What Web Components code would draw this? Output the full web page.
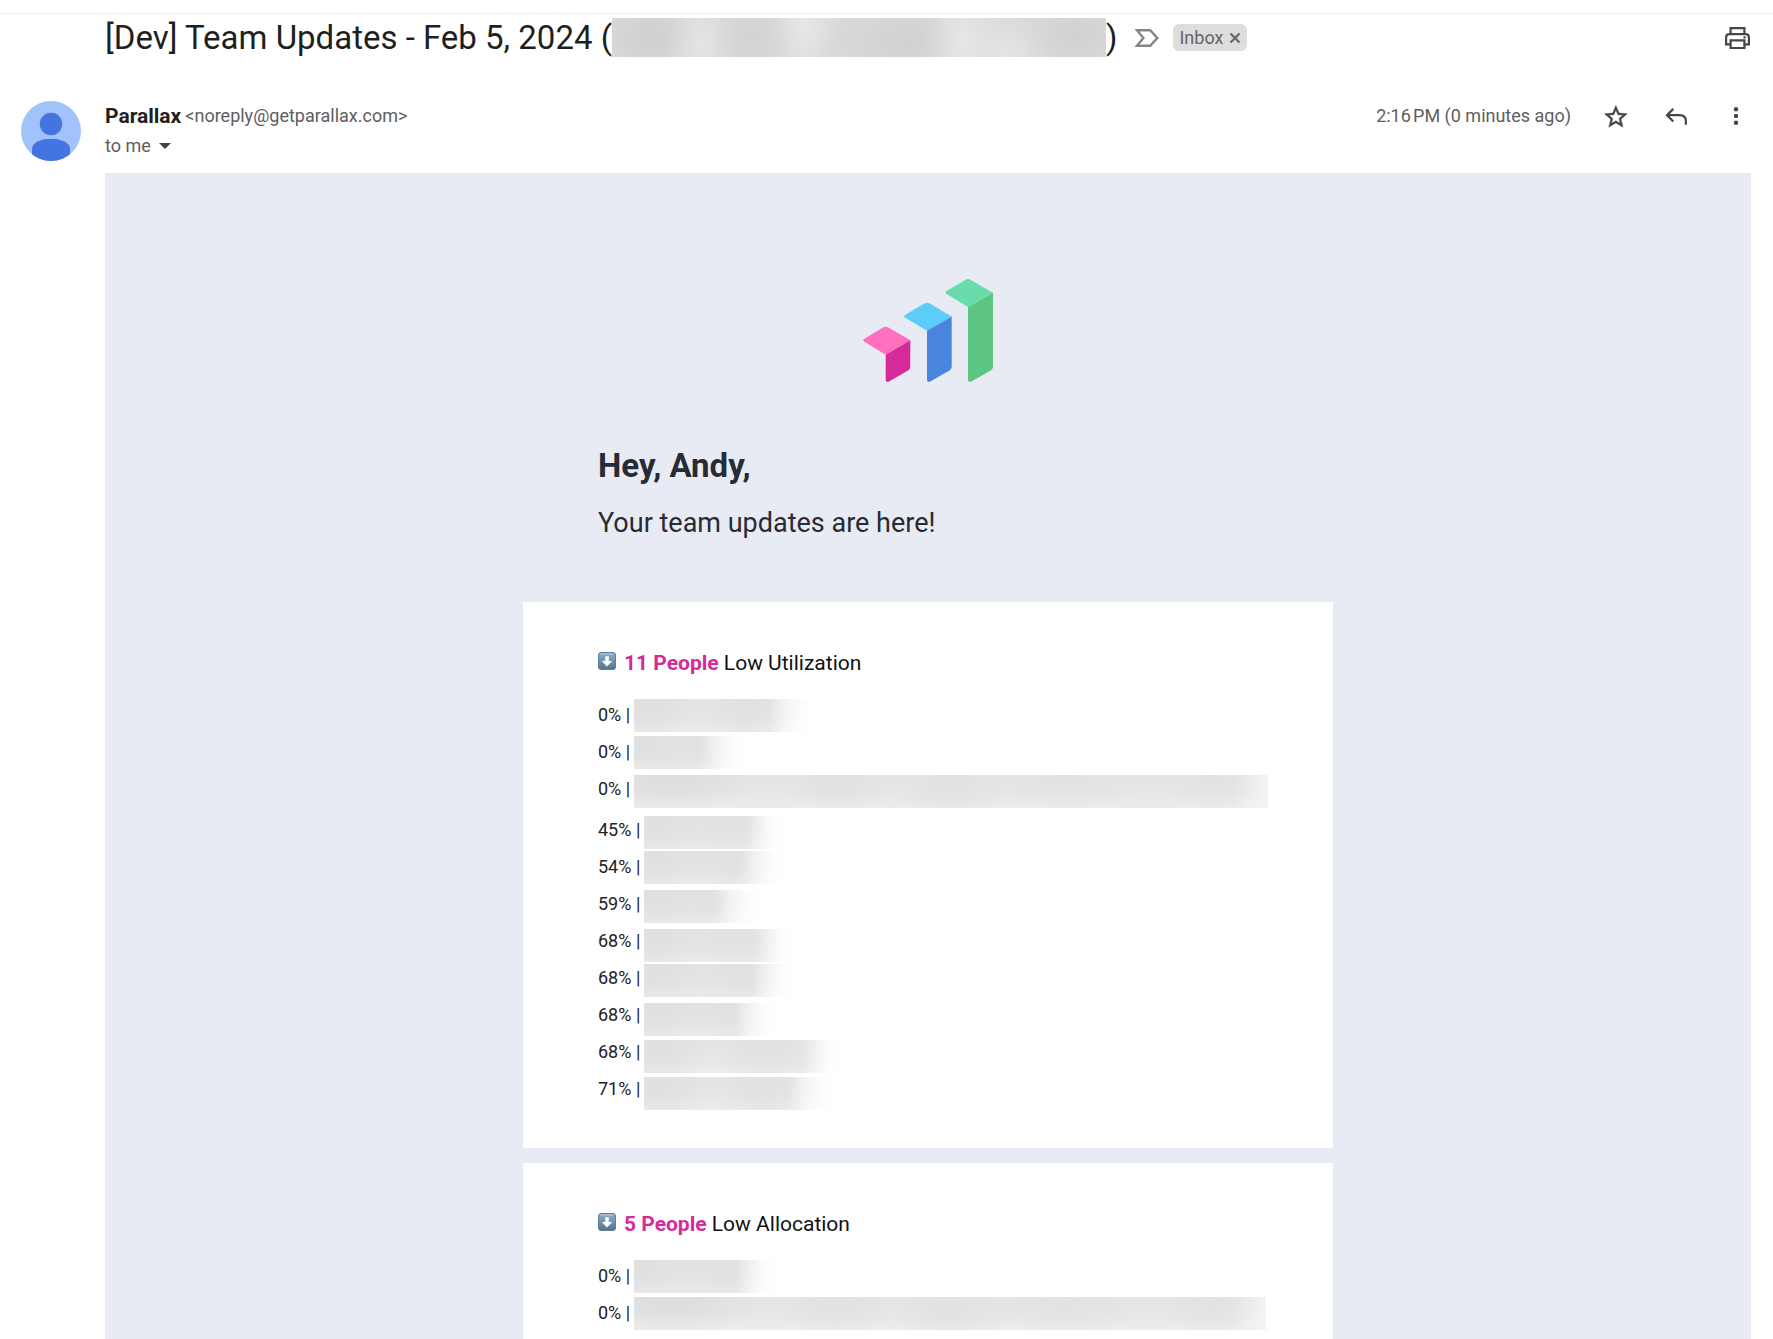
<!DOCTYPE html>
<html lang="en">
<head>
<meta charset="utf-8">
<title>Team Updates</title>
<style>
  html, body { margin: 0; background: #fff; }
  body { font-family: Roboto, "Liberation Sans", sans-serif; font-size: 18px; color: #202124; }
</style>
</head>
<body>
<mail-view>
  <mail-subject slot="subject">
    <span>[Dev] Team Updates - Feb 5, 2024 (</span>
    <blurred-name slot="name" tone="title" width="494"></blurred-name>
    <span slot="end">)</span>
  </mail-subject>
  <mail-sender slot="sender" name="Parallax" address="&lt;noreply@getparallax.com&gt;" time="2:16&#8239;PM (0 minutes ago)"></mail-sender>
  <update-digest slot="message">
    <span slot="greeting">Hey, Andy,</span>
    <span slot="intro">Your team updates are here!</span>
    <update-card count="11 People" label="Low Utilization">
      <person-group>
        <person-row value="0%" width="180" fade="42" place="start"></person-row>
        <person-row value="0%" width="112" fade="42" place="start"></person-row>
        <person-row value="0%" width="634" fade="0" place="center"></person-row>
      </person-group>
      <person-group>
        <person-row value="45%" width="140" fade="34" place="center"></person-row>
        <person-row value="54%" width="140" fade="40" place="start"></person-row>
        <person-row value="59%" width="116" fade="42" place="center"></person-row>
        <person-row value="68%" width="149" fade="34" place="end"></person-row>
        <person-row value="68%" width="150" fade="38" place="center"></person-row>
        <person-row value="68%" width="134" fade="40" place="end"></person-row>
        <person-row value="68%" width="196" fade="34" place="end"></person-row>
        <person-row value="71%" width="190" fade="42" place="end"></person-row>
      </person-group>
    </update-card>
    <update-card count="5 People" label="Low Allocation">
      <person-group>
        <person-row value="0%" width="144" fade="38" place="start"></person-row>
        <person-row value="0%" width="632" fade="0" place="start"></person-row>
      </person-group>
    </update-card>
  </update-digest>
</mail-view>

<script>
  const attach = (host, html) => { host.attachShadow({ mode: "open" }).innerHTML = html; };

  /* Page frame: toolbar edge, subject, sender and message stacked */
  customElements.define("mail-view", class extends HTMLElement {
    constructor() {
      super();
      attach(this, `
        <style>
          :host { display: block; height: 100vh; overflow: hidden; }
          .edge { height: 13px; border-bottom: 1px solid #ececec; }
          main { display: flex; flex-direction: column; }
        </style>
        <div class="edge"></div>
        <main>
          <slot name="subject"></slot>
          <slot name="sender"></slot>
          <slot name="message"></slot>
        </main>`);
    }
  });

  /* Blurred-out name */
  customElements.define("blurred-name", class extends HTMLElement {
    connectedCallback() {
      if (this.shadowRoot) return;
      const width = Number(this.getAttribute("width"));
      const fade = Number(this.getAttribute("fade") || 0);
      const title = this.getAttribute("tone") === "title";
      const glow = (x, y, w, h, c) => `radial-gradient(${w}px ${h}px at ${x} ${y}, ${c}, ${c}99 40%, ${c}33 75%, ${c}00)`;
      const layers = title
        ? [glow("18%", "70%", 34, 60, "#e4e4e4"), glow("39%", "20%", 34, 60, "#e7e7e7"), glow("71%", "60%", 40, 70, "#e7e7e7"),
           glow("80%", "90%", 40, 40, "#e4e4e4"), glow("8%", "50%", 60, 44, "#cfcfcf"), glow("28%", "50%", 60, 44, "#d3d3d3"),
           glow("60%", "60%", 90, 44, "#d1d1d1"), glow("94%", "40%", 60, 44, "#d1d1d1"), "linear-gradient(#dadada,#dadada)"]
        : width > 300
        ? [glow("6%", "15%", 90, 32, "#dcdcdc"), glow("32%", "25%", 60, 30, "#e1e1e1"), glow("50%", "40%", 60, 32, "#e1e1e1"),
           glow("68%", "20%", 80, 30, "#e2e2e2"), glow("91%", "20%", 50, 30, "#e2e2e2"),
           "linear-gradient(to right, transparent calc(100% - 36px), #f4f4f4)", "linear-gradient(#e4e4e4, #e7e7e7 55%, #ececec)"]
        : [glow("8%", "30%", 60, 34, "#dfdfdf"), glow("62%", "30%", 60, 34, "#e1e1e1"), "linear-gradient(#e4e4e4, #e8e8e8 60%, #ececec)"];
      attach(this, `
        <style>
          :host { display: block; flex: none; width: ${width}px; max-width: 100%; height: ${title ? 39 : 33}px; }
          div { height: 100%; background: ${layers.join(",")};
            ${fade ? `-webkit-mask-image: linear-gradient(to right, #000 calc(100% - ${fade + 4}px), rgba(0,0,0,.4) calc(100% - ${fade - 14}px), rgba(0,0,0,.1) calc(100% - 12px), transparent);` : ""} }
        </style>
        <div></div>`);
    }
  });

  customElements.define("mail-subject", class extends HTMLElement {
    constructor() {
      super();
      attach(this, `
        <style>
          :host { display: flex; align-items: center; padding: 4px 22px 0 105px; }
          h1 { margin: 0; display: flex; align-items: center; font-size: 33px; line-height: 39px; font-weight: 400; white-space: nowrap; color: #1f1f1f; }
          .mark { margin-left: 14px; }
          button { display: block; padding: 0; border: 0; background: none; font: inherit; color: inherit; }
          svg { display: block; }
          .tag { display: flex; align-items: center; gap: 6px; height: 27px; margin-left: 8px; padding: 0 6px; border-radius: 6px;
            background: #ddd; color: #666; font-size: 18px; line-height: 27px; }
          .print { margin-left: auto; }
        </style>
        <h1><slot></slot><slot name="name"></slot><slot name="end"></slot></h1>
        <button class="mark" aria-label="Mark as important">
          <svg width="34" height="30" viewBox="0 0 34 30" fill="none" stroke="#858585" stroke-width="2.4"><path d="M6 7.2H19.2L26.3 15L19.2 22.8H6L12.4 15Z"/></svg>
        </button>
        <span class="tag">Inbox
          <button aria-label="Remove label Inbox"><svg width="12" height="12" viewBox="0 0 12 12" stroke="#666" stroke-width="2.2"><path d="M1.5 1.5L10.5 10.5M10.5 1.5L1.5 10.5"/></svg></button>
        </span>
        <button class="print" aria-label="Print">
          <svg width="30" height="30" viewBox="0 0 30 30" fill="none" stroke="#444746" stroke-width="2.2">
            <path d="M9.6 11V5.1H23.4V11M9.6 21.4H5.1V14.5Q5.1 11.2 8.4 11.2H24.6Q27.9 11.2 27.9 14.5V21.4H23.4M9.6 17.4H23.4V25H9.6Z"/>
            <circle cx="23.6" cy="14.4" r="1.2" fill="#444746" stroke="none"/>
          </svg>
        </button>`);
    }
  });

  customElements.define("mail-sender", class extends HTMLElement {
    connectedCallback() {
      if (this.shadowRoot) return;
      attach(this, `
        <style>
          :host { display: flex; align-items: flex-start; gap: 24px; padding: 44px 22px 12px 21px; line-height: 30px; color: #5e5e5e; }
          svg { display: block; }
          .who { flex: 1; }
          .line { display: flex; gap: 4px; }
          h3 { margin: 0; font-size: 21px; line-height: 30px; font-weight: 700; color: #1f1f1f; }
          button { display: block; padding: 0; border: 0; background: none; font: inherit; color: inherit; }
          .to { display: flex; align-items: center; gap: 8px; }
          .actions { display: flex; gap: 30px; padding-left: 6px; }
        </style>
        <svg width="60" height="60" viewBox="0 0 60 60">
          <defs><clipPath id="round"><circle cx="30" cy="30" r="30"/></clipPath></defs>
          <g clip-path="url(#round)">
            <rect width="60" height="60" fill="#a1c2fa"/>
            <circle cx="30" cy="23" r="11.2" fill="#4374e0"/>
            <path d="M11 60V48C11 41 21 37.8 30 37.8S49 41 49 48V60Z" fill="#4374e0"/>
          </g>
        </svg>
        <div class="who">
          <div class="line"><h3></h3><span class="address"></span></div>
          <button class="to">to me <svg width="12" height="6" viewBox="0 0 12 6"><path d="M0 0H12L6 6Z" fill="#444"/></svg></button>
        </div>
        <time></time>
        <div class="actions">
          <button aria-label="Star"><svg width="30" height="30" viewBox="0 0 30 30" fill="#444746" stroke="#444746" stroke-width=".4"><path transform="translate(1.2 2.200) scale(1.14)" d="M22 9.240l-7.190-.62L12 2 9.190 8.630 2 9.240l5.460 4.730L5.820 21 12 17.270 18.180 21l-1.630-7.030L22 9.240zM12 15.400l-3.760 2.270 1-4.280-3.320-2.880 4.380-.38L12 6.100l1.710 4.040 4.380.38-3.320 2.880 1 4.280L12 15.400z"/></svg></button>
          <button aria-label="Reply"><svg width="30" height="30" viewBox="0 0 30 30" fill="none" stroke="#444746" stroke-width="2.2"><path d="M12.3 7.900L6 14.200L12.300 20.500M6 14.200H18.400Q24.900 14.200 24.900 20.200V23.800"/></svg></button>
          <button aria-label="More"><svg width="30" height="30" viewBox="0 0 30 30" fill="#444746"><circle cx="15" cy="8.2" r="2.2"/><circle cx="15" cy="15" r="2.2"/><circle cx="15" cy="21.8" r="2.2"/></svg></button>
        </div>`);
      const root = this.shadowRoot;
      root.querySelector("h3").textContent = this.getAttribute("name");
      root.querySelector(".address").textContent = this.getAttribute("address");
      root.querySelector("time").textContent = this.getAttribute("time");
    }
  });

  customElements.define("update-digest", class extends HTMLElement {
    constructor() {
      super();
      attach(this, `
        <style>
          :host { display: block; margin: 0 22px 0 105px; padding: 106px 0; background: #e8ebf4; color: #272b35; }
          .column { display: flex; flex-direction: column; max-width: 810px; margin: 0 auto; }
          svg { display: block; align-self: center; }
          .hello { padding: 64px 75px 62px; }
          h2 { margin: 0 0 22px; font-size: 33px; line-height: 39px; font-weight: 700; }
          p { margin: 0; font-size: 27px; line-height: 33px; }
          .cards { display: flex; flex-direction: column; gap: 15px; }
        </style>
        <div class="column">
          <svg width="130" height="103" viewBox="0 0 130 103" role="img" aria-label="Parallax">
            <path fill="#ff70c0" d="M1.3 62.7Q-1 61.2 1.3 59.7L20 48.6Q22.7 47 25.4 48.6L47.3 61.3L22.7 75.7Z"/>
            <path fill="#d62a9b" d="M22.7 75.7L47.3 61.3V87.4Q47.3 90 45 91.4L26.5 102.3Q22.7 104.2 22.7 100.5Z"/>
            <path fill="#5cccf9" d="M42.3 38.8Q40 37.3 42.3 35.8L61.3 24.6Q64 23 66.7 24.6L88.7 37.6L64 51.8Z"/>
            <path fill="#4985df" d="M64 51.8L88.7 37.6V87.4Q88.7 90 86.4 91.4L67.8 102.3Q64 104.2 64 100.5Z"/>
            <path fill="#69dcab" d="M83.6 15.1Q81.3 13.6 83.6 12.1L102.3 .9Q105 -.7 107.7 .9L130 13.7L105 28.1Z"/>
            <path fill="#5ac682" d="M105 28.1L130 13.7V87.4Q130 90 127.7 91.4L108.8 102.3Q105 104.2 105 100.5Z"/>
          </svg>
          <div class="hello">
            <h2><slot name="greeting"></slot></h2>
            <p><slot name="intro"></slot></p>
          </div>
          <div class="cards"><slot></slot></div>
        </div>`);
    }
  });

  customElements.define("update-card", class extends HTMLElement {
    connectedCallback() {
      if (this.shadowRoot) return;
      attach(this, `
        <style>
          :host { display: block; padding: 49px 64px 38px 75px; background: #fff; color: #111; }
          h3 { display: flex; align-items: center; margin: 0 0 24px; font-size: 21px; line-height: 24px; font-weight: 400; }
          svg { display: block; margin-right: 8px; }
          strong { font-weight: 700; color: #d62a9b; white-space: pre; }
          .groups { display: flex; flex-direction: column; gap: 4px; }
        </style>
        <h3>
          <svg width="18" height="22" viewBox="0 0 18 22">
            <defs><linearGradient id="shade" x2="0" y2="1"><stop stop-color="#8fb0cb"/><stop offset="1" stop-color="#54738f"/></linearGradient></defs>
            <rect x=".5" y=".5" width="17" height="17" rx="2.5" fill="url(#shade)" stroke="#5f7d98"/>
            <path d="M2.5 2H15.5" stroke="#b4cbdd"/>
            <path d="M7.2 4.2H10.8V9H14.2L9 14.6L3.8 9H7.2Z" fill="#fff"/>
          </svg>
          <strong></strong><span></span>
        </h3>
        <div class="groups"><slot></slot></div>`);
      this.shadowRoot.querySelector("strong").textContent = this.getAttribute("count") + " ";
      this.shadowRoot.querySelector("span").textContent = this.getAttribute("label");
    }
  });

  customElements.define("person-group", class extends HTMLElement {
    constructor() {
      super();
      attach(this, `<style>:host { display: flex; flex-direction: column; }</style><slot></slot>`);
    }
  });

  customElements.define("person-row", class extends HTMLElement {
    connectedCallback() {
      if (this.shadowRoot) return;
      const place = this.getAttribute("place");
      attach(this, `
        <style>
          :host { display: flex; align-items: flex-start; gap: 4px; height: 37px; font-size: 18px; line-height: 32px; color: #222; }
          blurred-name { align-self: ${place === "center" ? "center" : "flex-" + place}; }
        </style>
        <span></span>
        <blurred-name width="${this.getAttribute("width")}" fade="${this.getAttribute("fade")}"></blurred-name>`);
      this.shadowRoot.querySelector("span").textContent = this.getAttribute("value") + " |";
    }
  });
</script>
</body>
</html>
